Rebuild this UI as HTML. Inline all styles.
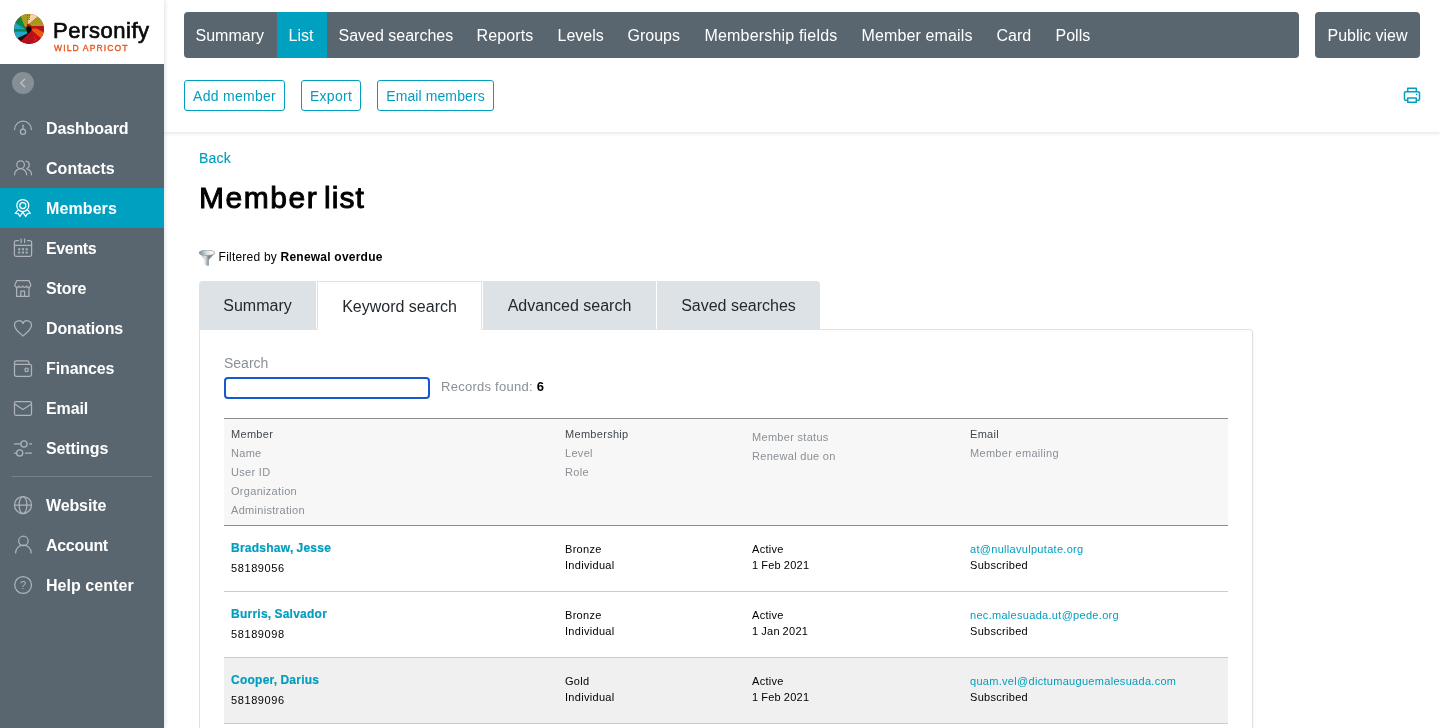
<!DOCTYPE html>
<html lang="en">
<head>
<meta charset="utf-8">
<title>Member list - Wild Apricot</title>
<style>
*{box-sizing:border-box;margin:0;padding:0}
html,body{width:1440px;height:728px;overflow:hidden;background:#fff}
body{font-family:"Liberation Sans",sans-serif;color:#000;position:relative;-webkit-font-smoothing:antialiased}
a{text-decoration:none;color:#009ebf}
ul{list-style:none}

/* ---------- sidebar ---------- */
.sidebar{will-change:transform;position:absolute;left:0;top:0;width:164px;height:728px;background:#59666f;box-shadow:1px 0 4px rgba(0,0,0,.12);z-index:5}
.logo{position:absolute;left:0;top:0;width:164px;height:64px;background:#fff}
.logo svg{position:absolute;left:14px;top:14px;width:30px;height:30px}
.logo .brand{position:absolute;left:53px;top:18px;font-size:22px;line-height:26px;color:#0a0a0a;letter-spacing:.55px;white-space:nowrap;-webkit-text-stroke:.7px #0a0a0a}
.logo .sub{position:absolute;left:54px;top:44px;font-size:8.5px;line-height:9px;font-weight:400;color:#e8541c;letter-spacing:1.14px;-webkit-text-stroke:.35px #e8541c;white-space:nowrap}
.collapse{position:absolute;left:12px;top:72px;width:22px;height:22px;border-radius:50%;background:rgba(255,255,255,.27)}
.collapse svg{position:absolute;left:0;top:0;width:22px;height:22px}
.menu{position:absolute;left:0;top:108px;width:164px}
.menu li{height:40px;position:relative}
.menu li.on{background:#00a0c1}
.menu li a{display:block;position:absolute;left:46px;top:1px;line-height:40px;letter-spacing:-.12px;font-size:16px;font-weight:700;color:#fff;white-space:nowrap}
.menu li svg{position:absolute;left:0;top:0;width:46px;height:40px;fill:none;stroke:#adb3b8;stroke-width:1.25;stroke-linecap:round;stroke-linejoin:round}
.menu li.on svg{stroke:#fff}
.menu li.sep{height:17px}
.menu li.sep:before{content:"";position:absolute;left:12px;right:12px;top:8px;height:1px;background:#75818a}

/* ---------- top bar ---------- */
.topbar{will-change:transform;position:absolute;left:164px;top:0;width:1276px;height:132px;background:#fff;box-shadow:0 1px 4px rgba(0,0,0,.13);z-index:3}
.mainnav{position:absolute;left:20px;top:12px;width:1115px;height:46px;background:#59666f;border-radius:4px;overflow:hidden;display:flex}
.mainnav a{display:block;height:46px;line-height:48px;padding:0 0 0 11.5px;color:#fff;font-size:16px;white-space:nowrap}
.mainnav a.on{background:#00a0c1}
.public{position:absolute;left:1151px;top:12px;width:105px;height:46px;line-height:48px;text-align:center;background:#59666f;border-radius:4px;color:#fff;font-size:16px;white-space:nowrap}
.actions{position:absolute;left:20px;top:80px;display:flex}
.btn{display:block;height:31px;line-height:31px;border:1px solid #009ebf;border-radius:3px;color:#009ebf;font-size:14px;letter-spacing:.28px;text-align:center;margin-right:16px;white-space:nowrap;background:#fff}
.print{position:absolute;left:1239px;top:86px;width:18px;height:18px}

/* ---------- content ---------- */
.content{will-change:transform;position:absolute;left:164px;top:132px;width:1276px;height:596px;overflow:hidden}
.back{position:absolute;left:35px;top:17px;font-size:14px;line-height:18px;letter-spacing:.2px;-webkit-text-stroke:.15px #009ebf}
h1{position:absolute;left:35px;top:47px;font-size:30px;line-height:38px;font-weight:400;color:#000;white-space:nowrap;letter-spacing:1px;word-spacing:-3.6px;-webkit-text-stroke:.95px #000}
h1 span{letter-spacing:1.55px}
.filter{position:absolute;left:35px;top:117px;height:18px;font-size:12px;line-height:16px;white-space:nowrap;letter-spacing:.22px}
.filter svg{position:absolute;left:0;top:1px;width:16px;height:16px}
.filter span{position:absolute;left:19.6px;top:0}
.tabs{position:absolute;left:35px;top:149px;height:48px;display:flex}
.tabs a{display:block;height:48px;line-height:50px;background:#dde2e6;color:#24292e;font-size:16px;text-align:center;margin-right:1px;white-space:nowrap}
.tabs a:first-child{border-top-left-radius:4px}
.tabs a:last-child{border-top-right-radius:4px}
.tabs a.on{background:#fff;border:1px solid #dde2e6;border-bottom:0;line-height:50px;height:49px;position:relative;z-index:2}
.panel{position:absolute;left:35px;top:197px;width:1054px;height:420px;border:1px solid #dde2e6;border-radius:0 3px 0 0;background:#fff;box-shadow:1px 1px 2px rgba(0,0,0,.04)}
.panel label{position:absolute;left:24px;top:24px;font-size:14px;line-height:18px;color:#8a9096}
.panel input{position:absolute;left:24px;top:47px;width:206px;height:22px;border:2px solid #1558d0;border-radius:4px;background:#fff;outline:0}
.found{position:absolute;left:241px;top:48px;font-size:13px;line-height:18px;color:#8a9096;white-space:nowrap;letter-spacing:.26px}
.found b{color:#000}

table{position:absolute;left:24px;top:88px;width:1004px;border-collapse:collapse;table-layout:fixed;font-size:11px;letter-spacing:.3px}
th,td{text-align:left;vertical-align:top;font-weight:400;padding:0 0 0 7px;white-space:nowrap}
thead tr{height:107px;background:#f7f7f7;border-top:1px solid #8c8c8c;border-bottom:1px solid #8c8c8c}
th div{line-height:19px;color:#8a9096}
th div.h{color:#42484d}
th{padding-top:6px}
tbody tr{height:66px;border-bottom:1px solid #ccc}
tbody tr.alt{background:#f0f0f0}
td{padding-top:0;word-spacing:-.6px}
td .n{display:block;font-size:12px;font-weight:700;line-height:16px;margin-top:14px;color:#009ebf;letter-spacing:.25px;-webkit-text-stroke:.2px #009ebf}
td .id{display:block;line-height:16px;margin-top:4px;letter-spacing:.6px}
td .l{display:block;line-height:16px}
td .l:first-child{margin-top:15px}
</style>
</head>
<body>

<aside class="sidebar">
  <div class="logo">
    <svg viewBox="0 0 30 30"><defs><clipPath id="lc"><circle cx="15" cy="15" r="15"/></clipPath></defs><g clip-path="url(#lc)"><rect width="30" height="30" fill="#bf0d19"/><polygon fill="#a99c1e" points="3.1,-2.4 17.9,-2.4 13.5,9.6 12.2,13.4 10.2,12.2"/><polygon fill="#f6d4a6" points="17.5,-2.4 25.5,1.3 14.9,9.9 13.3,9.3"/><polygon fill="#a99c1e" points="23.7,2.5 32.8,6.1 32.8,12.3 18.2,12.3 14.9,9.9"/><polygon fill="#bf0d19" points="18.2,12.3 32.8,12.3 32.8,19.5 18.2,14.9"/><polygon fill="#ea5a0f" points="18.2,14.6 22.5,14.6 32.8,20.1 27.9,25.5 18.2,17.0"/><polygon fill="#bf0d19" points="18.2,16.7 28.5,25.5 18.2,32.8 6.1,27.0 17.3,16.5"/><polygon fill="#111111" points="2.5,23.1 7.0,27.0 17.6,16.7 14.0,15.2 12.2,19.5"/><polygon fill="#1fa8cc" points="-2.4,17.3 3.1,24.3 13.4,19.5 12.8,17.3"/><polygon fill="#0f8549" points="-2.4,14.0 -2.4,17.5 12.9,17.5 12.2,14.0"/><polygon fill="#1fa8cc" points="-2.4,14.9 1.6,7.0 11.6,15.3"/><polygon fill="#0f8549" points="0.7,8.2 6.1,0.7 10.5,12.2 11.7,15.3"/><circle cx="14.9" cy="14.9" r="2.6" fill="#0a0a0a"/><rect x="13.07" y="1.13" width=".9" height=".9" fill="#0f8549"/><rect x="15.07" y="1.13" width=".9" height=".9" fill="#0f8549"/><rect x="13.07" y="3.13" width=".9" height=".9" fill="#0f8549"/><rect x="15.07" y="3.13" width=".9" height=".9" fill="#0f8549"/><rect x="13.07" y="5.07" width=".9" height=".9" fill="#0f8549"/><rect x="15.07" y="5.07" width=".9" height=".9" fill="#0f8549"/><rect x="13.07" y="7.79" width=".9" height=".9" fill="#0f8549"/><rect x="22.03" y="5.07" width=".9" height=".9" fill="#ea5a0f"/><rect x="24.16" y="5.07" width=".9" height=".9" fill="#ea5a0f"/><rect x="20.22" y="7.19" width=".9" height=".9" fill="#ea5a0f"/><rect x="23.13" y="7.61" width=".9" height=".9" fill="#ea5a0f"/><rect x="18.10" y="9.19" width=".9" height=".9" fill="#ea5a0f"/><rect x="21.13" y="9.19" width=".9" height=".9" fill="#ea5a0f"/><rect x="25.07" y="7.19" width=".9" height=".9" fill="#ea5a0f"/><rect x="15.07" y="22.03" width=".9" height=".9" fill="#3a3a3a"/><rect x="14.03" y="24.16" width=".9" height=".9" fill="#3a3a3a"/><rect x="13.07" y="26.16" width=".9" height=".9" fill="#3a3a3a"/><rect x="15.19" y="26.16" width=".9" height=".9" fill="#3a3a3a"/><rect x="14.03" y="28.22" width=".9" height=".9" fill="#3a3a3a"/><rect x="20.22" y="23.13" width=".9" height=".9" fill="#ea5a0f"/><rect x="21.13" y="25.07" width=".9" height=".9" fill="#ea5a0f"/><rect x="20.22" y="26.28" width=".9" height=".9" fill="#ea5a0f"/><rect x="2.03" y="15.07" width=".9" height=".9" fill="#2a4fd0"/><rect x="5.07" y="15.07" width=".9" height=".9" fill="#2a4fd0"/><rect x="2.64" y="9.91" width=".9" height=".9" fill="#0f8549"/><rect x="4.76" y="11.13" width=".9" height=".9" fill="#0f8549"/><rect x="6.58" y="12.94" width=".9" height=".9" fill="#0f8549"/><rect x="3.25" y="8.10" width=".9" height=".9" fill="#0f8549"/></g></svg>
    <div class="brand">Personify</div>
    <div class="sub">WILD APRICOT</div>
  </div>
  <div class="collapse"><svg viewBox="0 0 22 22"><path d="M12.6 7.2 8.8 11l3.8 3.8" fill="none" stroke="#bcc1c5" stroke-width="1.4" stroke-linecap="round" stroke-linejoin="round"/></svg></div>
  <ul class="menu">
    <li><svg viewBox="0 0 46 40"><path d="M14.6 21.6A8.4 8.4 0 0 1 31.4 21.6"/><path d="M23 17.2V21"/><circle cx="23" cy="23.8" r="2.6"/></svg><a>Dashboard</a></li>
    <li><svg viewBox="0 0 46 40"><circle cx="20.6" cy="16.7" r="3.8"/><path d="M14.5 26.8a6.1 6.1 0 0 1 12.2 0"/><path d="M26 13.1a3.8 3.8 0 0 1 .9 7.3"/><path d="M27.3 21.2a6 6 0 0 1 4.2 5.6"/></svg><a style="letter-spacing:.03px">Contacts</a></li>
    <li class="on"><svg viewBox="0 0 46 40"><circle cx="22.8" cy="17.5" r="6"/><circle cx="22.8" cy="17.5" r="3"/><path d="M18.3 21.6 15.3 25.4l2.9.2 1.7 2.9 2.9-4.4 2.9 4.4 1.7-2.9 2.9-.2-3-3.8"/></svg><a style="letter-spacing:.1px">Members</a></li>
    <li><svg viewBox="0 0 46 40"><path d="M18.6 12.6h-2.4a1.8 1.8 0 0 0-1.8 1.8v12.2a1.8 1.8 0 0 0 1.8 1.8h13.6a1.8 1.8 0 0 0 1.8-1.8V14.4a1.8 1.8 0 0 0-1.8-1.8h-2.4"/><path d="M14.6 17.3h16.8"/><path d="M21.1 11v3.6M24.6 11v3.6"/><path d="M19.2 21.2h.1M22.9 21.2h.1M26.6 21.2h.1M19.2 24.6h.1M22.9 24.6h.1M26.6 24.6h.1" stroke-width="2" stroke-linecap="square"/></svg><a style="letter-spacing:-.35px">Events</a></li>
    <li><svg viewBox="0 0 46 40"><path d="M16.8 12.6h12.2l1.7 4.2a2.1 2.1 0 0 1-4 1.2a2.1 2.1 0 0 1-3.9 0a2.1 2.1 0 0 1-3.9 0a2.1 2.1 0 0 1-4-1.2z"/><path d="M16.6 19.6v8.8h12.4v-8.8"/><path d="M20.8 28.4v-5.2h3.8v5.2"/></svg><a>Store</a></li>
    <li><svg viewBox="0 0 46 40"><path d="M23 28c-2.600-2.400-8.500-6.400-8.500-10.800a4.400 4.400 0 0 1 8.500-1.700a4.400 4.400 0 0 1 8.500 1.700c0 4.400-5.900 8.400-8.500 10.800z"/></svg><a>Donations</a></li>
    <li><svg viewBox="0 0 46 40"><path d="M14.500 16.400h15.200a1.800 1.800 0 0 1 1.800 1.800v8.300a1.800 1.800 0 0 1-1.800 1.800h-13.400a1.800 1.800 0 0 1-1.800-1.800v-11.900a1.800 1.800 0 0 1 1.800-1.800h10.800a1.800 1.800 0 0 1 1.800 1.800v1.800"/><circle cx="26.600" cy="21.900" r="1.700"/></svg><a>Finances</a></li>
    <li><svg viewBox="0 0 46 40"><rect x="14.500" y="13.600" width="17" height="13.700" rx="1.500"/><path d="M15 16.300l8 5.200l8-5.200"/></svg><a>Email</a></li>
    <li><svg viewBox="0 0 46 40"><path d="M14.500 15.900h6M29.600 15.900h1.900"/><circle cx="24" cy="15.900" r="3.100"/><path d="M14.500 25h1.800M25.400 25h6.100"/><circle cx="19.700" cy="25" r="3.100"/></svg><a>Settings</a></li>
    <li class="sep"></li>
    <li><svg viewBox="0 0 46 40"><circle cx="23" cy="20" r="8.500"/><ellipse cx="23" cy="20" rx="3.900" ry="8.500"/><path d="M14.500 20h17"/></svg><a>Website</a></li>
    <li><svg viewBox="0 0 46 40"><circle cx="23.400" cy="15.900" r="4.700"/><path d="M15.600 27.900a7.800 7.800 0 0 1 15.600 0"/></svg><a style="letter-spacing:-.3px">Account</a></li>
    <li><svg viewBox="0 0 46 40"><circle cx="23.100" cy="20" r="8.400"/><text x="23.100" y="24" text-anchor="middle" font-family="Liberation Sans, sans-serif" font-size="11" font-weight="400" fill="#adb3b8" stroke="none">?</text></svg><a style="letter-spacing:.05px">Help center</a></li>
  </ul>
</aside>

<header class="topbar">
  <nav class="mainnav">
    <a style="width:93px">Summary</a><a class="on" style="width:50px">List</a><a style="width:138px">Saved searches</a><a style="width:81px;letter-spacing:.12px">Reports</a><a style="width:70px">Levels</a><a style="width:77px">Groups</a><a style="width:157px;letter-spacing:.18px">Membership fields</a><a style="width:135px;letter-spacing:.13px">Member emails</a><a style="width:59px">Card</a><a style="width:58px">Polls</a>
  </nav>
  <a class="public">Public view</a>
  <div class="actions">
    <a class="btn" style="width:101px">Add member</a>
    <a class="btn" style="width:60px">Export</a>
    <a class="btn" style="width:117px;letter-spacing:.1px">Email members</a>
  </div>
  <svg class="print" viewBox="0 0 18 18" fill="none" stroke="#00a0c1" stroke-width="1.5" stroke-linejoin="round"><path d="M4.700 5.800V2.200h8.600v3.600"/><path d="M4.700 14.200H2.600a1.100 1.100 0 0 1-1.100-1.100V6.900a1.100 1.100 0 0 1 1.100-1.100h12.800a1.100 1.100 0 0 1 1.100 1.100v6.200a1.100 1.100 0 0 1-1.100 1.100h-2.100"/><path d="M4.700 12h8.600v4.300H4.700z"/><circle cx="13.600" cy="8.400" r=".8" fill="#00a0c1" stroke="none"/></svg>
</header>

<main class="content">
  <a class="back">Back</a>
  <h1><span>Member</span> list</h1>
  <div class="filter"><svg viewBox="0 0 16 16"><defs><linearGradient id="fg" x1="0" y1="0" x2="1" y2="0"><stop offset="0" stop-color="#aab3b9"/><stop offset=".38" stop-color="#dfe4e7"/><stop offset=".6" stop-color="#7f8b93"/><stop offset="1" stop-color="#6f7b83"/></linearGradient><linearGradient id="fe" x1="0" y1="0" x2="1" y2="0"><stop offset="0" stop-color="#7a868e"/><stop offset=".45" stop-color="#d5dadd"/><stop offset=".8" stop-color="#fbfcfc"/><stop offset="1" stop-color="#dde1e4"/></linearGradient></defs><path d="M.2 3 5.400 9.800V14.300Q7.600 16.300 9.800 15.400V9.800L15.800 3z" fill="url(#fg)"/><ellipse cx="8" cy="2.800" rx="8" ry="2.700" fill="url(#fe)" stroke="#7f8b93" stroke-width=".6"/></svg><span>Filtered by <b>Renewal overdue</b></span></div>
  <div class="tabs">
    <a style="width:117px">Summary</a><a class="on" style="width:165px">Keyword search</a><a style="width:173px">Advanced search</a><a style="width:163px">Saved searches</a>
  </div>
  <section class="panel">
    <label>Search</label>
    <input type="text">
    <div class="found">Records found: <b>6</b></div>
    <table>
      <colgroup><col style="width:334px"><col style="width:187px"><col style="width:218px"><col></colgroup>
      <thead>
        <tr>
          <th><div class="h">Member</div><div>Name</div><div>User ID</div><div>Organization</div><div>Administration</div></th>
          <th><div class="h">Membership</div><div>Level</div><div>Role</div></th>
          <th><div style="margin-top:3px">Member status</div><div>Renewal due on</div></th>
          <th><div class="h">Email</div><div>Member emailing</div></th>
        </tr>
      </thead>
      <tbody>
        <tr>
          <td><a class="n">Bradshaw, Jesse</a><span class="id">58189056</span></td>
          <td><span class="l">Bronze</span><span class="l">Individual</span></td>
          <td><span class="l">Active</span><span class="l">1 Feb 2021</span></td>
          <td><a class="l">at@nullavulputate.org</a><span class="l">Subscribed</span></td>
        </tr>
        <tr>
          <td><a class="n">Burris, Salvador</a><span class="id">58189098</span></td>
          <td><span class="l">Bronze</span><span class="l">Individual</span></td>
          <td><span class="l">Active</span><span class="l">1 Jan 2021</span></td>
          <td><a class="l">nec.malesuada.ut@pede.org</a><span class="l">Subscribed</span></td>
        </tr>
        <tr class="alt">
          <td><a class="n">Cooper, Darius</a><span class="id">58189096</span></td>
          <td><span class="l">Gold</span><span class="l">Individual</span></td>
          <td><span class="l">Active</span><span class="l">1 Feb 2021</span></td>
          <td><a class="l">quam.vel@dictumauguemalesuada.com</a><span class="l">Subscribed</span></td>
        </tr>
      </tbody>
    </table>
  </section>
</main>

</body>
</html>
